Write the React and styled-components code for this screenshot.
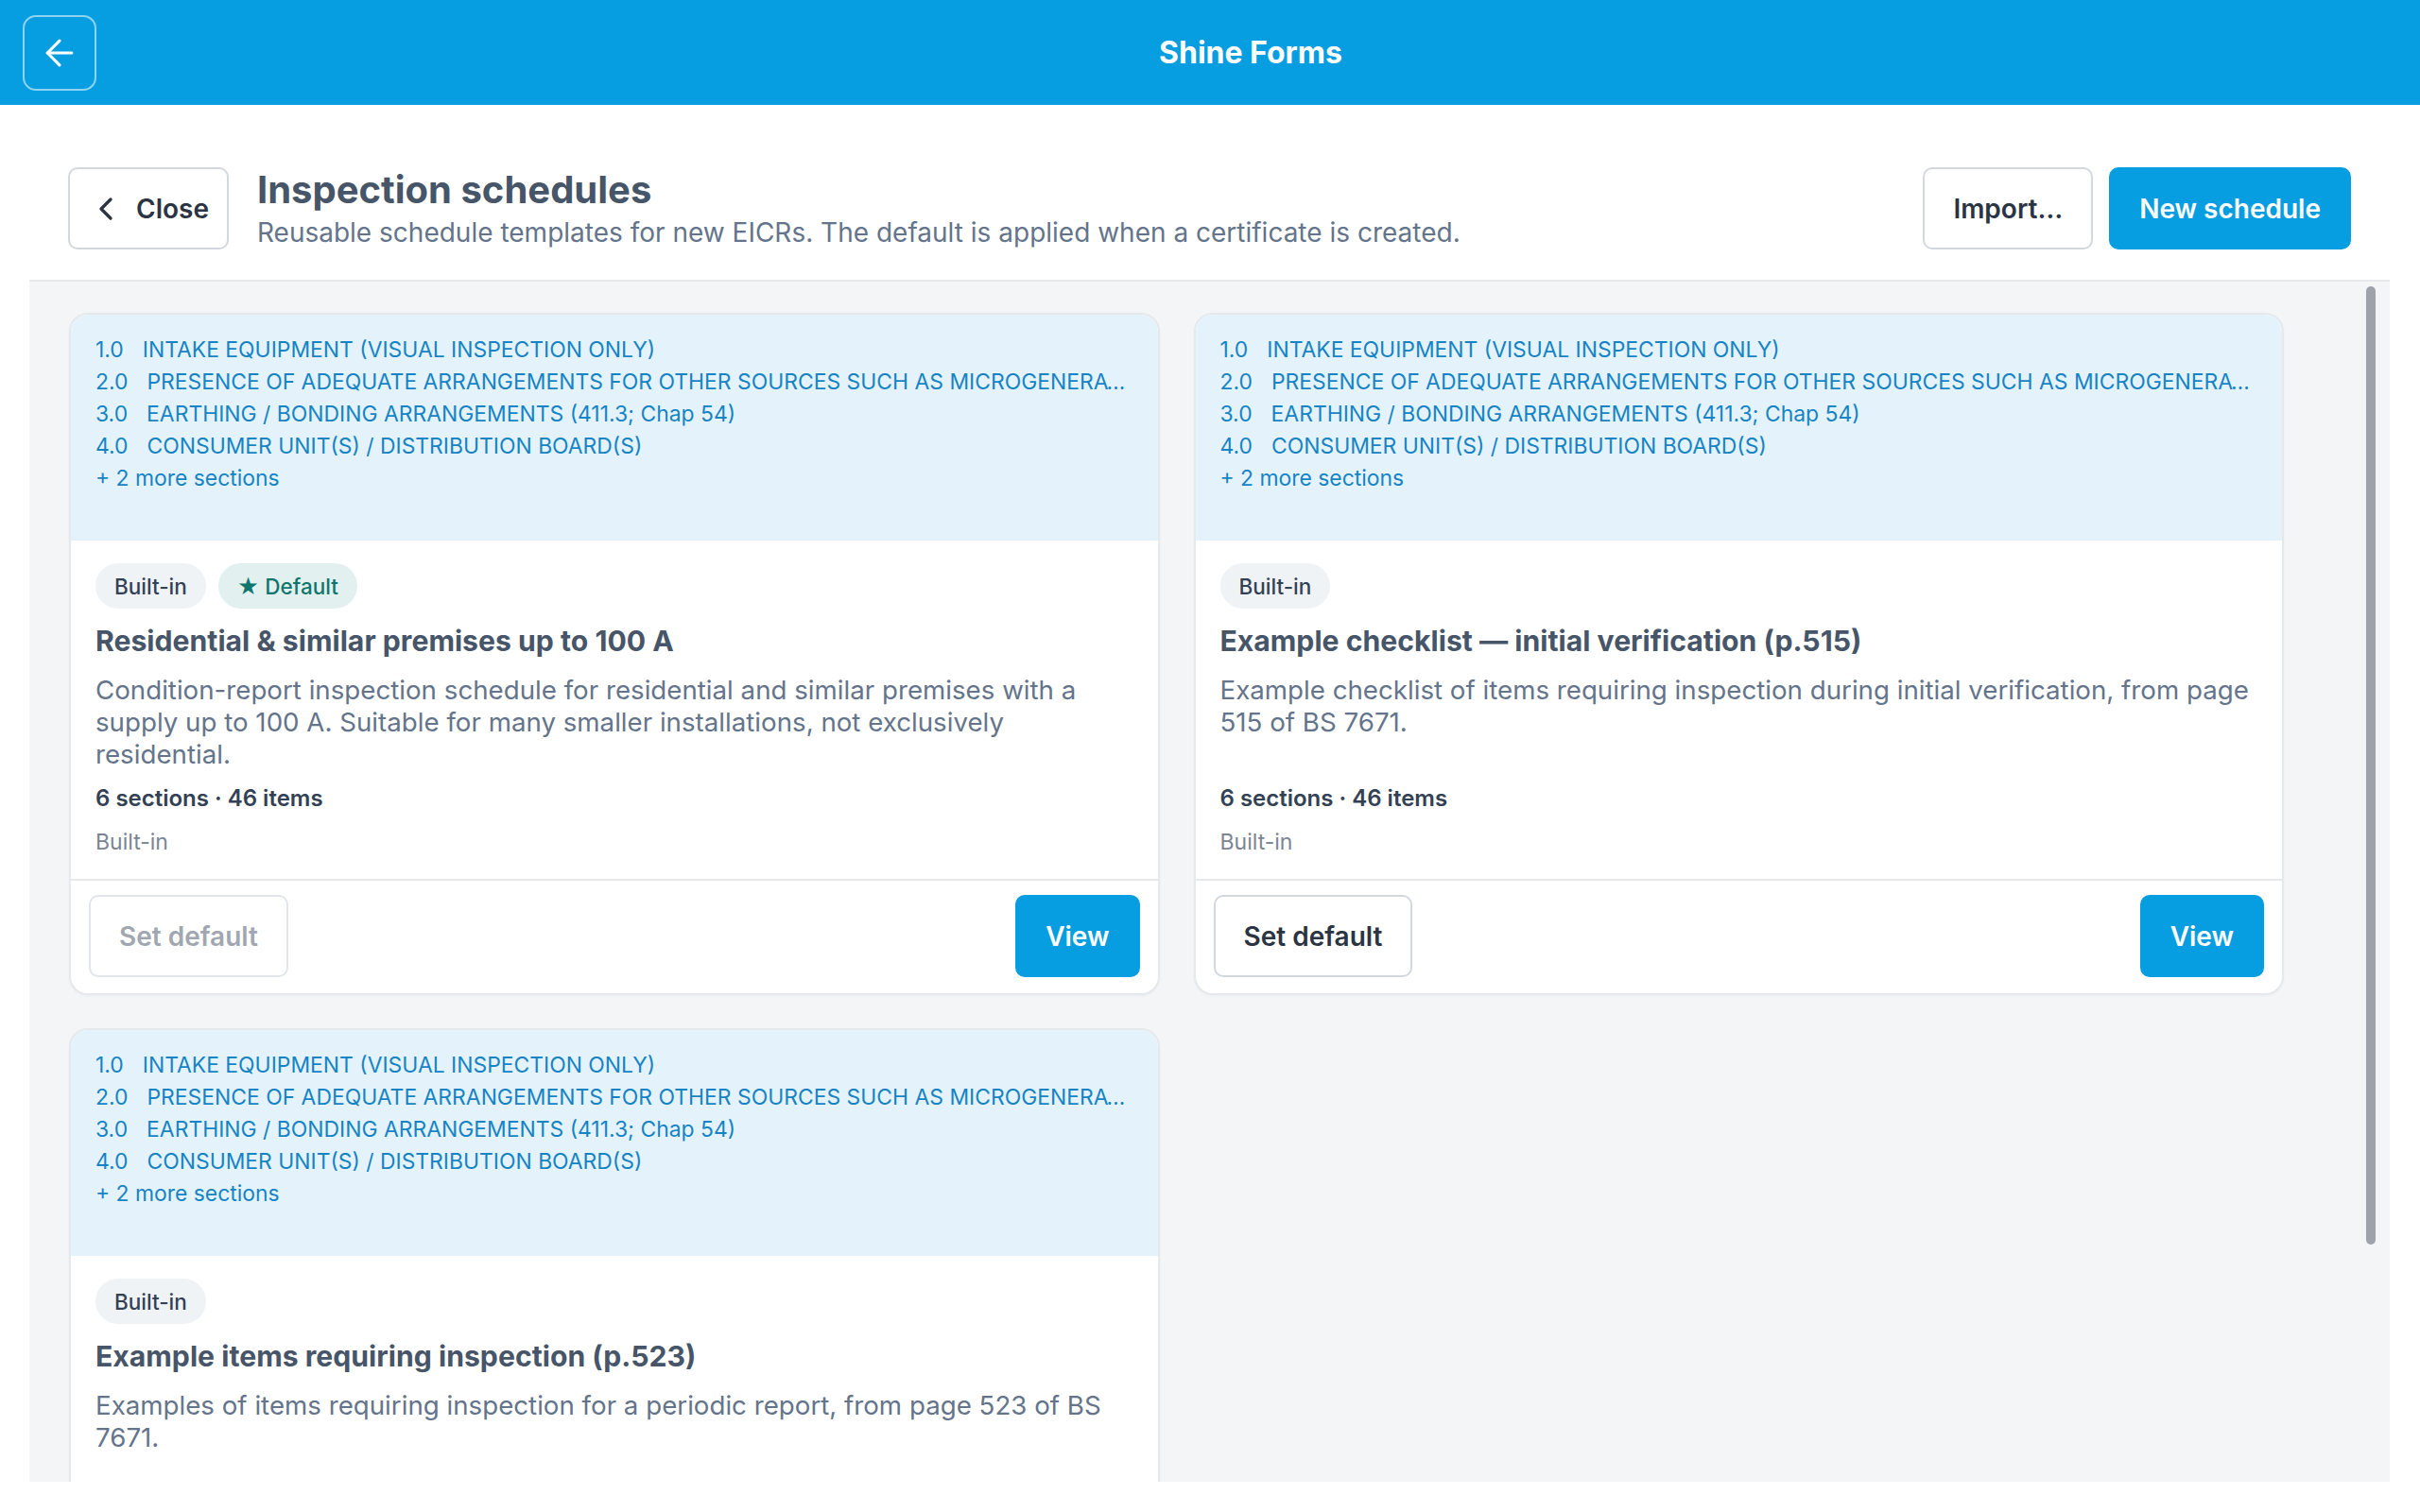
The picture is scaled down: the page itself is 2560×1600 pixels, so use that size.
import React from 'react';
import styled, { createGlobalStyle } from 'styled-components';
import { ArrowLeft, ChevronLeft } from 'lucide-react';

const GlobalStyle = createGlobalStyle`
  html, body {
    margin: 0;
    height: 100%;
  }
  body {
    font-family: Inter, "Noto Sans", "DejaVu Sans", sans-serif;
    background: #ffffff;
    color: #1e293b;
    overflow: hidden;
  }
  #root {
    height: 100%;
  }
  * {
    box-sizing: border-box;
  }
`;

const Shell = styled.div`
  height: 100vh;
  display: flex;
  flex-direction: column;
`;

const TopBar = styled.header`
  height: 111px;
  flex-shrink: 0;
  display: flex;
  align-items: center;
  gap: 8px;
  padding: 0 24px;
  background: #069ee1;
`;

const BackButton = styled.button`
  width: 78px;
  height: 80px;
  display: flex;
  align-items: center;
  justify-content: center;
  background: transparent;
  border: 2px solid rgba(255, 255, 255, 0.55);
  border-radius: 14px;
  color: #ffffff;
  padding: 0;
`;

const AppTitle = styled.div`
  flex: 1;
  text-align: center;
  color: #ffffff;
  font-size: 32px;
  font-weight: 700;
`;

const Page = styled.main`
  flex: 1;
  min-height: 0;
  display: flex;
  flex-direction: column;
  padding: 0 32px 32px 31px;
`;

const Toolbar = styled.div`
  display: flex;
  align-items: center;
  gap: 30px;
  padding: 66px 41px 32px;
`;

const Button = styled.button`
  height: 87px;
  display: inline-flex;
  align-items: center;
  justify-content: center;
  gap: 12px;
  padding: ${(p) => p.$pad || '0 30px'};
  border-radius: 10px;
  font-family: inherit;
  font-size: 28px;
  font-weight: 600;
  border: 2px solid ${(p) => (p.$primary ? '#069ee1' : p.$disabled ? '#e2e5e9' : '#d3d8de')};
  background: ${(p) => (p.$primary ? '#069ee1' : '#ffffff')};
  color: ${(p) => (p.$primary ? '#ffffff' : p.$disabled ? '#a1a7b0' : '#2b3442')};
  flex-shrink: 0;
`;

const Heading = styled.div`
  flex: 1;
  min-width: 0;
`;

const PageTitle = styled.h1`
  margin: 0 0 6px;
  font-size: 40px;
  line-height: 44px;
  font-weight: 700;
  color: #475569;
`;

const PageSubtitle = styled.p`
  margin: 0;
  font-size: 28px;
  line-height: 34px;
  color: #64748b;
`;

const Actions = styled.div`
  display: flex;
  gap: 17px;
`;

const PanelFrame = styled.section`
  position: relative;
  flex: 1;
  min-height: 0;
  background: #f3f5f7;
  border-top: 2px solid #e6e8eb;
`;

const Panel = styled.div`
  height: 100%;
  overflow-y: auto;
  padding: 33px 0 42px 42px;
  scrollbar-width: none;

  &::-webkit-scrollbar {
    display: none;
  }
`;

const ScrollThumb = styled.div`
  position: absolute;
  top: 5px;
  right: 15px;
  width: 10px;
  height: ${(p) => p.$length}px;
  border-radius: 5px;
  background: #9ea3ab;
`;

const Grid = styled.div`
  display: grid;
  grid-template-columns: repeat(2, minmax(0, 1fr));
  gap: 35px 36px;
  max-width: 2343px;
`;

const Card = styled.article`
  display: flex;
  flex-direction: column;
  background: #ffffff;
  border: 2px solid #e6e9ec;
  border-radius: 20px;
  overflow: hidden;
  box-shadow: 0 1px 3px rgba(15, 23, 42, 0.04);
`;

const Preview = styled.div`
  height: 239px;
  padding: 20px 34px 0 26px;
  background: #e4f3fb;
`;

const PreviewLine = styled.div`
  display: flex;
  gap: 20px;
  font-size: 22.9px;
  line-height: 34px;
  color: #1684c4;
  white-space: nowrap;
`;

const SectionName = styled.span`
  min-width: 0;
  overflow: hidden;
  text-overflow: ellipsis;
`;

const CardBody = styled.div`
  flex: 1;
  display: flex;
  flex-direction: column;
  padding: 24px 24px 24px 26px;
`;

const Badges = styled.div`
  display: flex;
  gap: 13px;
`;

const Badge = styled.span`
  height: 48px;
  display: inline-flex;
  align-items: center;
  gap: 8px;
  padding: 0 20px;
  border-radius: 24px;
  font-size: 22.5px;
  font-weight: 500;
  background: ${(p) => (p.$tone === 'teal' ? '#e2f1ef' : '#f0f3f6')};
  color: ${(p) => (p.$tone === 'teal' ? '#0f766e' : '#334155')};
`;

const CardTitle = styled.h2`
  margin: 14px 0 0;
  font-size: 30.2px;
  line-height: 40px;
  font-weight: 700;
  color: #475569;
`;

const Description = styled.p`
  margin: 15px 0 0;
  min-height: 102px;
  font-size: 27.7px;
  line-height: 34px;
  color: #64748b;
`;

const Stats = styled.div`
  margin-top: 15px;
  font-size: 24px;
  line-height: 30px;
  font-weight: 600;
  color: #334155;
`;

const Source = styled.div`
  margin-top: 16px;
  font-size: 23px;
  line-height: 30px;
  color: #7b8593;
`;

const CardFooter = styled.div`
  display: flex;
  justify-content: space-between;
  align-items: center;
  padding: 15px 19px 17px;
  border-top: 2px solid #e6e8eb;
`;

const sections = [
  ['1.0', 'INTAKE EQUIPMENT (VISUAL INSPECTION ONLY)'],
  ['2.0', 'PRESENCE OF ADEQUATE ARRANGEMENTS FOR OTHER SOURCES SUCH AS MICROGENERATORS (551.6; 551.7)'],
  ['3.0', 'EARTHING / BONDING ARRANGEMENTS (411.3; Chap 54)'],
  ['4.0', 'CONSUMER UNIT(S) / DISTRIBUTION BOARD(S)'],
];

const schedules = [
  {
    id: 'residential',
    title: 'Residential & similar premises up to 100 A',
    description:
      'Condition-report inspection schedule for residential and similar premises with a supply up to 100 A. Suitable for many smaller installations, not exclusively residential.',
    isDefault: true,
  },
  {
    id: 'p515',
    title: 'Example checklist \u2014 initial verification (p.515)',
    description:
      'Example checklist of items requiring inspection during initial verification, from page 515 of BS 7671.',
  },
  {
    id: 'p523',
    title: 'Example items requiring inspection (p.523)',
    description:
      'Examples of items requiring inspection for a periodic report, from page 523 of BS 7671.',
  },
];

function ScheduleCard({ schedule }) {
  return (
    <Card>
      <Preview>
        {sections.map(([num, name]) => (
          <PreviewLine key={num}>
            <span>{num}</span>
            <SectionName>{name}</SectionName>
          </PreviewLine>
        ))}
        <PreviewLine>+ 2 more sections</PreviewLine>
      </Preview>
      <CardBody>
        <Badges>
          <Badge>Built-in</Badge>
          {schedule.isDefault && <Badge $tone="teal">★ Default</Badge>}
        </Badges>
        <CardTitle>{schedule.title}</CardTitle>
        <Description>{schedule.description}</Description>
        <Stats>6 sections · 46 items</Stats>
        <Source>Built-in</Source>
      </CardBody>
      <CardFooter>
        <Button $disabled={schedule.isDefault}>Set default</Button>
        <Button $primary>View</Button>
      </CardFooter>
    </Card>
  );
}

export default function App() {
  return (
    <Shell>
      <GlobalStyle />
      <TopBar>
        <BackButton aria-label="Back">
          <ArrowLeft size={44} strokeWidth={1.7} />
        </BackButton>
        <AppTitle>Shine Forms</AppTitle>
      </TopBar>
      <Page>
        <Toolbar>
          <Button $pad="0 19px 0 18px">
            <ChevronLeft size={40} strokeWidth={2} />
            Close
          </Button>
          <Heading>
            <PageTitle>Inspection schedules</PageTitle>
            <PageSubtitle>
              Reusable schedule templates for new EICRs. The default is applied when a certificate is created.
            </PageSubtitle>
          </Heading>
          <Actions>
            <Button>Import…</Button>
            <Button $primary>New schedule</Button>
          </Actions>
        </Toolbar>
        <PanelFrame>
          <Panel>
            <Grid>
              {schedules.map((s) => (
                <ScheduleCard key={s.id} schedule={s} />
              ))}
            </Grid>
          </Panel>
          <ScrollThumb $length={1014} />
        </PanelFrame>
      </Page>
    </Shell>
  );
}
